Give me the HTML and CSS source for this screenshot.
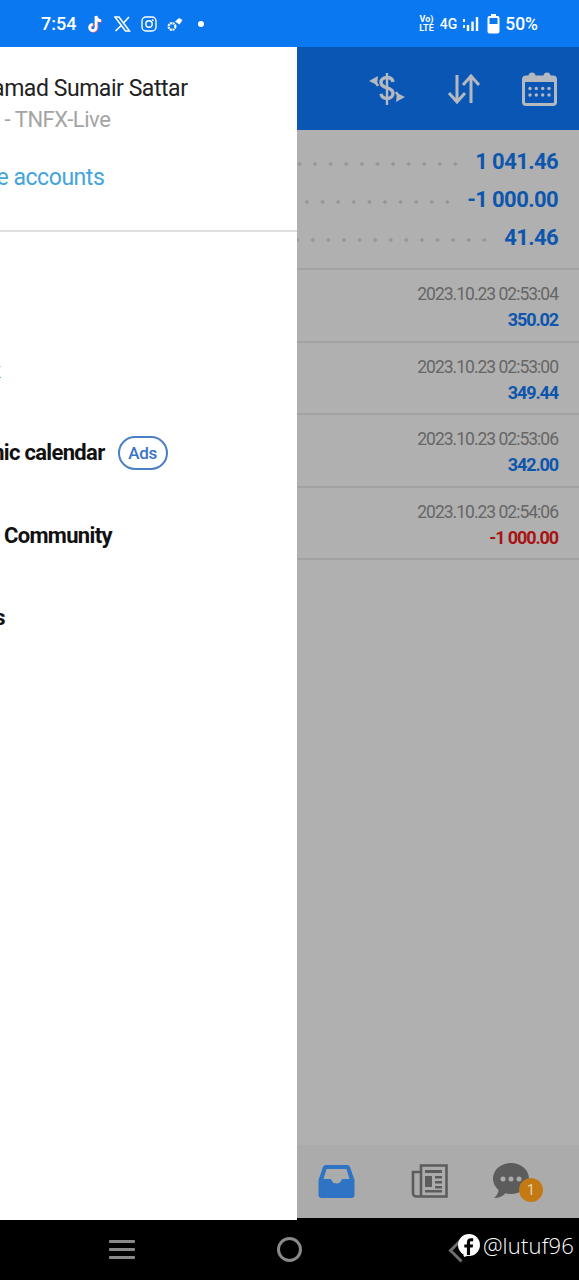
FILE: index.html
```html
<!DOCTYPE html>
<html lang="en">
<head>
  <meta charset="UTF-8">
  <meta name="viewport" content="width=device-width, initial-scale=1.0">
  <title>History</title>
  <link rel="stylesheet" href="styles.css">
</head>
<body>
<div class="phone">

  <!-- Status bar -->
  <div class="status-bar">
    <div class="status-left">
      <span class="clock">7:54</span>
      <svg width="18" height="20" viewBox="0 0 18 20"><path d="M10 2v11.500a3.200 3.200 0 1 1-3.200-3.200M10 2c.3 2.800 2.200 4.500 5 4.700" fill="none" stroke="#ff5a7e" stroke-width="2.800" transform="translate(.8 .6)"/><path d="M10 2v11.500a3.200 3.200 0 1 1-3.200-3.200M10 2c.3 2.800 2.200 4.500 5 4.700" fill="none" stroke="#fff" stroke-width="2.800"/></svg>
      <svg width="17" height="16" viewBox="0 0 17 16"><path d="M1 1h4l10.500 14h-4zM15 1 9.500 7M7.300 9.500 1.500 15" fill="none" stroke="#fff" stroke-width="1.600"/></svg>
      <svg width="16" height="16" viewBox="0 0 16 16"><rect x="1" y="1" width="14" height="14" rx="4" fill="none" stroke="#fff" stroke-width="1.400"/><circle cx="8" cy="8" r="3.200" fill="none" stroke="#fff" stroke-width="1.400"/><circle cx="11.800" cy="4.200" r=".9" fill="#fff"/></svg>
      <svg width="16" height="16" viewBox="0 0 16 16"><circle cx="5" cy="10.500" r="3.400" fill="none" stroke="#fff" stroke-width="2.200" stroke-dasharray="2 .7"/><path d="M8 5.500 12 2l3.500 2-3 4.500z" fill="#fff"/></svg>
      <span class="st-dot"></span>
    </div>
    <div class="status-right">
      <span class="volte">Vo)<br>LTE</span>
      <span class="net">4G</span>
      <svg width="17" height="16" viewBox="0 0 17 16"><path d="M2 3v3M2 9v3" stroke="#fff" stroke-width="2"/><path d="M6 9v6M10.500 5.500V15M15 1v14" stroke="#fff" stroke-width="2.400"/></svg>
      <svg class="battery" width="13" height="20" viewBox="0 0 13 20"><path d="M4 0h5v2H4z" fill="#fff"/><rect x=".5" y="2" width="12" height="17.500" rx="2" fill="#fff"/><rect x="2.500" y="4" width="8" height="6" fill="#0a78f0"/></svg>
      <span class="battery-text">50%</span>
    </div>
  </div>

  <div class="screen">
    <!-- Drawer, still sliding in from the left -->
    <div class="drawer">
      <div class="drawer-inner">
        <div class="account">
          <div class="acc-name">Muhamad Sumair Sattar</div>
          <div class="acc-server">100000 - TNFX-Live</div>
          <div class="acc-link">Manage accounts</div>
        </div>
        <div class="menu">
          <div class="menu-item item-first">Mailbox</div>
          <div class="menu-item">Economic calendar <span class="ads">Ads</span></div>
          <div class="menu-item">Traders Community</div>
          <div class="menu-item">Settings</div>
        </div>
      </div>
    </div>

    <!-- History screen under the dim layer -->
    <div class="main">
      <div class="toolbar">
        <svg width="38" height="34" viewBox="0 0 38 34"><g fill="none" stroke="#b4b8bf"><path d="M25 10c-.5-3-3-4.500-6-4.500-3.500 0-6 2-6 5 0 3.200 2.500 4.300 6 5.300s6 2.400 6 5.400-2.500 5.200-6 5.200-5.500-1.800-6-4.600" stroke-width="3.400"/><path d="M19 1v32" stroke-width="2.400"/><path d="M10 14C9 12 8 10 5.500 8.500" stroke-width="2.600"/><path d="M28 20c1 2 2 4 4.500 5.500" stroke-width="2.600"/></g><path d="M1 9l9-5-1 9zM37 25l-9 5 1-9z" fill="#b4b8bf"/></svg>
        <svg width="34" height="30" viewBox="0 0 34 30"><g fill="none" stroke="#b4b8bf" stroke-width="3"><path d="M10 1v27M2 19l8 9 8-9"/><path d="M24 29V2M16 11l8-9 8 9"/></g></svg>
        <svg width="35" height="34" viewBox="0 0 35 34"><rect x="1.500" y="5" width="32" height="27.500" rx="2.500" fill="none" stroke="#b4b8bf" stroke-width="3"/><path d="M1.500 5h32v5h-32z" fill="#b4b8bf"/><circle cx="10" cy="4" r="3.500" fill="#b4b8bf"/><circle cx="25" cy="4" r="3.500" fill="#b4b8bf"/><g fill="#b4b8bf"><circle cx="8" cy="16.500" r="1.700"/><circle cx="14.300" cy="16.500" r="1.700"/><circle cx="20.700" cy="16.500" r="1.700"/><circle cx="27" cy="16.500" r="1.700"/><circle cx="8" cy="23" r="1.700"/><circle cx="14.300" cy="23" r="1.700"/><circle cx="20.700" cy="23" r="1.700"/><circle cx="27" cy="23" r="1.700"/></g></svg>
      </div>

      <div class="summary">
        <div class="sum-row"><span class="dots"></span><span class="sum-val">1 041.46</span></div>
        <div class="sum-row"><span class="dots"></span><span class="sum-val">-1 000.00</span></div>
        <div class="sum-row"><span class="dots"></span><span class="sum-val">41.46</span></div>
      </div>

      <div class="deals">
        <div class="deal"><div class="deal-time">2023.10.23 02:53:04</div><div class="deal-val">350.02</div></div>
        <div class="deal"><div class="deal-time">2023.10.23 02:53:00</div><div class="deal-val">349.44</div></div>
        <div class="deal"><div class="deal-time">2023.10.23 02:53:06</div><div class="deal-val">342.00</div></div>
        <div class="deal"><div class="deal-time">2023.10.23 02:54:06</div><div class="deal-val neg">-1 000.00</div></div>
      </div>

      <!-- Bottom tabs -->
      <div class="tabs">
        <svg width="37" height="33" viewBox="0 0 37 33"><path d="M8 0h21c1.500 0 2.500.8 3 2l4.500 13v15c0 1.700-1.300 3-3 3h-30c-1.700 0-3-1.300-3-3V15L5 2c.5-1.200 1.500-2 3-2z" fill="#2f74c4"/><path d="M8.500 4h20l3 10H25c-1 0-1.500.6-1.800 1.500-.5 2-2.300 3-4.700 3s-4.200-1-4.700-3C13.500 14.600 13 14 12 14H5.500z" fill="#ababab"/></svg>
        <svg class="tab-news" width="38" height="36" viewBox="0 0 38 36"><g fill="none" stroke="#5c5c5c" stroke-width="2.600"><path d="M10 2.500h25.500v31H10zM10 9H2v21c0 2 1.500 3.500 4 3.500h4"/></g><path d="M14 7h17v3H14zM14 13h7v11h-7zM24 13h7v2.500h-7zM24 18h7v2.500h-7zM24 23h7v2.500h-7zM14 27h17v2.500H14z" fill="#5c5c5c"/></svg>
        <div class="chat-icon">
          <svg width="36" height="36" viewBox="0 0 36 36"><path d="M18 0c10 0 18 7 18 15.500S28 31 18 31c-2 0-4-.3-5.500-.8C10 33 6 35 1 35c3-2.500 4.500-5.500 4.500-8C2 24 0 20 0 15.500 0 7 8 0 18 0z" fill="#5c5c5c"/><circle cx="10" cy="16" r="2.500" fill="#ababab"/><circle cx="18" cy="16" r="2.500" fill="#ababab"/><circle cx="26" cy="16" r="2.500" fill="#ababab"/></svg>
          <span class="badge">1</span>
        </div>
      </div>
    </div>
  </div>

  <!-- Navigation bar -->
  <div class="nav-bar">
    <span class="nav-menu"><i></i><i></i><i></i></span>
    <span class="nav-home"></span>
    <span class="nav-back"></span>
    <div class="watermark">
      <svg width="22" height="23" viewBox="0 0 21 22"><circle cx="10.500" cy="10.500" r="10.500" fill="#fff"/><path d="M5 20l1 2 5-2z" fill="#fff"/><path d="M8.500 20v-7H6v-3h2.500V8c0-2.500 1.500-4 3.800-4h2.200v3h-1.700c-1 0-1.300.5-1.300 1.300V10h3l-.5 3h-2.500v7z" fill="#000"/></svg>
      <span>@lutuf96</span>
    </div>
  </div>
</div>
</body>
</html>
```

FILE: styles.css
```css
* {
  box-sizing: border-box;
}

body {
  margin: 0;
  font-family: Roboto, 'Liberation Sans', sans-serif;
  background: #000;
}

.phone {
  width: 579px;
  height: 1280px;
  display: flex;
  flex-direction: column;
  overflow: hidden;
}

/* Status bar */
.status-bar {
  height: 47px;
  background: #0a78f0;
  color: #fff;
  display: flex;
  justify-content: space-between;
  align-items: center;
  padding: 0 41px;
}

.status-left {
  display: flex;
  align-items: center;
  gap: 10px;
}

.clock {
  font-size: 18px;
  font-weight: 500;
}

.st-dot {
  width: 6px;
  height: 6px;
  border-radius: 50%;
  background: #fff;
  margin-left: 5px;
}

.status-right {
  display: flex;
  align-items: center;
  gap: 5px;
}

.volte {
  font-size: 9px;
  font-weight: 700;
  line-height: 9px;
  text-align: center;
}

.net {
  font-size: 14px;
  font-weight: 500;
  margin-left: 1px;
}

.battery {
  margin-left: 3px;
}

.battery-text {
  font-size: 17.5px;
  font-weight: 500;
}

/* Screen */
.screen {
  flex: 1;
  display: flex;
  min-height: 0;
}

.drawer {
  width: 297px;
  flex: none;
  background: #fff;
  overflow: hidden;
}

.drawer-inner {
  width: 369px;
  margin-left: -72px;
}

.account {
  height: 185px;
  padding-top: 28px;
  border-bottom: 2px solid #e0e0e0;
}

.acc-name {
  font-size: 23px;
  letter-spacing: -0.45px;
  color: #222;
  line-height: 28px;
  margin-left: 20px;
}

.acc-server {
  font-size: 22px;
  letter-spacing: -0.45px;
  color: #a4a4a4;
  line-height: 28px;
  margin-top: 3px;
}

.acc-link {
  font-size: 23px;
  letter-spacing: -0.45px;
  color: #45a4dc;
  line-height: 28px;
  margin-top: 30px;
}

.menu-item {
  font-size: 22px;
  font-weight: 700;
  letter-spacing: -0.68px;
  color: #111;
  height: 82.5px;
  display: flex;
  align-items: center;
  gap: 13px;
}

.item-first {
  margin-top: 97px;
  letter-spacing: -0.95px;
}

.ads {
  border: 2px solid #4b80c4;
  border-radius: 17px;
  color: #3b74c8;
  font-size: 17px;
  font-weight: 500;
  letter-spacing: -0.3px;
  width: 50px;
  height: 34px;
  display: flex;
  align-items: center;
  justify-content: center;
}

/* Main screen (dimmed) */
.main {
  flex: 1;
  min-width: 0;
  margin-bottom: 2px;
  background: #b0b0b0;
  display: flex;
  flex-direction: column;
}

.toolbar {
  height: 83px;
  background: #0a56b4;
  display: flex;
  align-items: center;
  justify-content: flex-end;
  gap: 41px;
  padding-right: 22px;
}

.summary {
  height: 140px;
  padding: 12px 21px 0 0;
  border-bottom: 2px solid #a2a2a2;
}

.sum-row {
  height: 38px;
  display: flex;
  align-items: center;
  gap: 12px;
}

.dots {
  flex: 1;
  height: 4px;
  margin-top: 5px;
  background: radial-gradient(circle, #979797 1.5px, transparent 2px) right center / 15.6px 4px repeat-x;
}

.sum-val {
  font-size: 22px;
  font-weight: 700;
  letter-spacing: -0.6px;
  color: #0c56ae;
}

.deal {
  height: 72.5px;
  padding: 12px 21px 0 0;
  border-bottom: 2px solid #a2a2a2;
  text-align: right;
}

.deal-time {
  font-size: 17.5px;
  letter-spacing: -1px;
  color: #666;
  line-height: 24px;
}

.deal-val {
  font-size: 18px;
  font-weight: 700;
  letter-spacing: -1.1px;
  color: #0c56ae;
  line-height: 24px;
  margin-top: 2px;
}

.deal-val.neg {
  color: #a81414;
}

/* Bottom tabs */
.tabs {
  margin-top: auto;
  height: 73px;
  background: #ababab;
  display: flex;
  align-items: center;
  padding: 0 0 1px 21px;
}

.tab-news {
  margin-left: 56px;
}

.chat-icon {
  position: relative;
  width: 36px;
  height: 36px;
  margin-left: 44px;
}

.badge {
  position: absolute;
  left: 26px;
  top: 15px;
  width: 24px;
  height: 24px;
  border-radius: 50%;
  background: #c47a14;
  color: #e8d5b0;
  font-size: 14px;
  display: flex;
  align-items: center;
  justify-content: center;
}

/* Navigation bar */
.nav-bar {
  height: 60px;
  flex: none;
  background: #000;
  position: relative;
}

.nav-menu {
  position: absolute;
  left: 109px;
  top: 20px;
  display: flex;
  flex-direction: column;
  gap: 5px;
}

.nav-menu i {
  display: block;
  width: 26px;
  height: 3px;
  border-radius: 1px;
  background: #8a8a8a;
}

.nav-home {
  position: absolute;
  left: 277px;
  top: 17px;
  width: 25px;
  height: 25px;
  border: 3.5px solid #8a8a8a;
  border-radius: 50%;
}

.nav-back {
  position: absolute;
  left: 452px;
  top: 22px;
  width: 17px;
  height: 17px;
  border-left: 3px solid #6e6e6e;
  border-bottom: 3px solid #6e6e6e;
  transform: rotate(45deg);
}

.watermark {
  position: absolute;
  right: 5px;
  top: 10px;
  display: flex;
  align-items: center;
  gap: 3px;
  color: #fff;
  font-family: 'Open Sans', sans-serif;
  font-size: 22px;
  font-weight: 300;
  letter-spacing: 0.2px;
}
```
